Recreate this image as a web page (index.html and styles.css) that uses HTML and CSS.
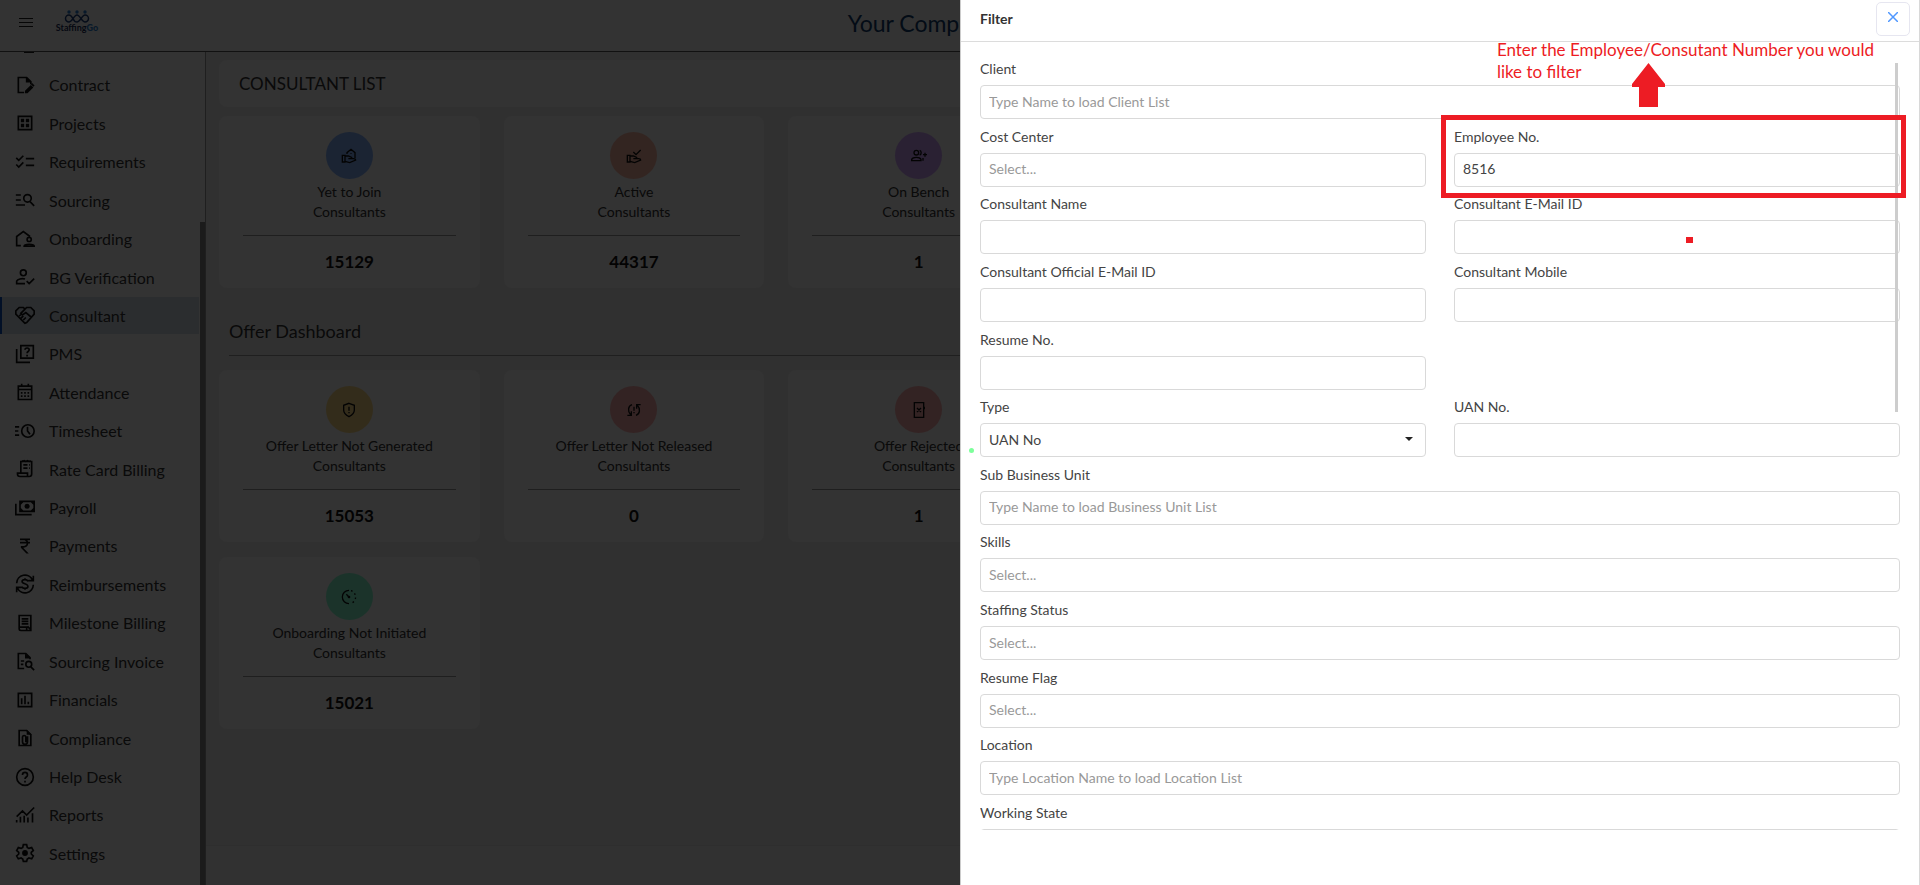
FILE: index.html
```html
<!DOCTYPE html>
<html lang="en">
<head>
<meta charset="UTF-8">
<meta name="viewport" content="width=device-width, initial-scale=1.0">
<title>StaffingGo - Consultant List</title>
<link rel="stylesheet" href="styles.css">
</head>
<body>

<div class="page">
  <header class="topbar">
    <div class="topbar__left">
      <button class="burger" aria-label="Menu">
        <svg viewBox="0 0 16 12"><path d="M1 1.500h14M1 5.500h14M1 9.500h14"/></svg>
      </button>
      <div class="logo">
        <svg viewBox="0 0 26 13">
          <g fill="#2b7fd0"><circle cx="5" cy="2" r="1.700"/><circle cx="13" cy="2" r="1.700"/><circle cx="21" cy="2" r="1.700"/></g>
          <path d="M9 8.500C7.500 6 6.500 5 5 5a3.500 3.500 0 0 0 0 7c3 0 5-7 8-7s5 7 8 7a3.500 3.500 0 0 0 0-7c-3 0-5 7-8 7s-2.500-1-4-3.500z" fill="none" stroke="#1d3f7c" stroke-width="1.500"/>
        </svg>
        <span class="logo__name">Staffing<b>Go</b></span>
      </div>
    </div>
    <div class="company">Your Comp</div>
  </header>

  <div class="layout">
    <nav class="menu">
      <div class="menu__cut"><svg viewBox="0 0 10 1"><path d="M0 .5h10"/></svg></div>
      <a href="#"><svg viewBox="0 0 24 24"><path d="M11 21H4V3h10l5 5v3M14 3v5h5" /><path class="fill" d="M14 3v5h5zM12 22v-3l7-7 3 3-7 7zM19 11l1.500-1.500 3 3L22 14z"/></svg>Contract</a>
      <a href="#"><svg viewBox="0 0 24 24"><path d="M4 4h16v16H4z"/><path class="fill" d="M7 7h4v4H7zM13 7h4v4h-4zM7 13h4v4H7zM13 13h4v4h-4z"/></svg>Projects</a>
      <a href="#"><svg viewBox="0 0 24 24"><path d="M1.500 7l3 3 5.500-5.500M1.500 15l3 3 5.500-5.500M13 8h10M13 16h10"/></svg>Requirements</a>
      <a href="#"><svg viewBox="0 0 24 24"><path d="M1 6h6M1 12h6M1 18h11M18 14l5 5"/><circle cx="15" cy="10" r="4.500"/></svg>Sourcing</a>
      <a href="#"><svg viewBox="0 0 24 24"><path d="M7 20H2V9l8-6 8 6"/><circle cx="17" cy="12.500" r="2.500"/><path d="M11 20.500c0-3 12-3 12 0z"/></svg>Onboarding</a>
      <a href="#"><svg viewBox="0 0 24 24"><circle cx="10" cy="7" r="3.500"/><path d="M12 20H2v-3c1-2 6-4 10-2.500M14 17l3 3 6-6"/></svg>BG Verification</a>
      <a href="#" class="active"><svg viewBox="0 0 24 24"><path d="M12 22L1 11V7l4-4h5l2 2 2-2h5l4 4v4L14 21zM12 5L7 10l2 2 4-3 7 6M5 13l3-2M7 16l3-3M10 18l3-3"/></svg>Consultant</a>
      <a href="#"><svg viewBox="0 0 24 24"><path d="M7 2h15v15H7zM2 6v16h16M12 7c0-3 5-3 5 0 0 2-2.500 2-2.500 4M14.500 13v2"/></svg>PMS</a>
      <a href="#"><svg viewBox="0 0 24 24"><path d="M4 5h16v16H4zM4 9h16M8 2v4M16 2v4M7 13h2M11 13h2M15 13h2M7 17h2M11 17h2M15 17h2"/></svg>Attendance</a>
      <a href="#"><svg viewBox="0 0 24 24"><circle cx="15.500" cy="12" r="7.500"/><path d="M15 7v5l3 4M0 7h5M0 12h4M0 17h5"/></svg>Timesheet</a>
      <a href="#"><svg viewBox="0 0 24 24"><path d="M7 16V3h13v15c0 2-1 3-3 3H6c-2 0-3-1-3-3v-1h12v3M10 7h5M10 11h5M17 7h1M17 11h1M8 2l1 1 2-1 2 1 2-1 2 1 2-1"/></svg>Rate Card Billing</a>
      <a href="#"><svg viewBox="0 0 24 24"><path d="M1 7v13h19"/><path class="fill" fill-rule="evenodd" d="M5 3h19v14H5zM7 8v4l3 3h9l3-3V8l-3-3h-9z"/><circle class="fill" cx="14.500" cy="10" r="3"/></svg>Payroll</a>
      <a href="#"><svg viewBox="0 0 24 24"><path class="fill" d="M13.660 7c-.56-1.180-1.760-2-3.160-2H6V3h12v2h-3.260c.48.58.84 1.260 1.050 2H18v2h-2.020c-.25 2.800-2.610 5-5.480 5h-.73l6.730 7h-2.770L7 14v-2h3.500c1.760 0 3.220-1.300 3.460-3H6V7h7.660z"/></svg>Payments</a>
      <a href="#"><svg viewBox="0 0 24 24"><path d="M2 11a10 10 0 0 1 19-4M22 13a10 10 0 0 1-19 4M22 2v6h-6M2 22v-6h6M15.500 9c-.5-3-7-3-7 0 0 3.500 7 2 7 6 0 3-7 3-7 0M12 5v2M12 17v2"/></svg>Reimbursements</a>
      <a href="#"><svg viewBox="0 0 24 24"><path d="M5 3h14v18H7c-1 0-2-1-2-2zM5 17h9v3M8 7h8M8 10h8M8 13h8M15 16l4 4"/></svg>Milestone Billing</a>
      <a href="#"><svg viewBox="0 0 24 24"><path d="M11 21H4V3h9l5 5v2M7 12h4M7 16h3M19 19l4 4"/><circle cx="16.500" cy="16" r="3.500"/><path class="fill" d="M12 3v6h7z"/></svg>Sourcing Invoice</a>
      <a href="#"><svg viewBox="0 0 24 24"><path d="M4 4h16v16H4zM8 10v7M12 7v10M16 14v3"/></svg>Financials</a>
      <a href="#"><svg viewBox="0 0 24 24"><path d="M5 3h9l5 5v13H5zM15 10v6.500a3 3 0 0 1-6 0V11a2 2 0 0 1 4 0v6"/><path class="fill" d="M14 2v6h6z"/></svg>Compliance</a>
      <a href="#"><svg viewBox="0 0 24 24"><circle cx="12" cy="12" r="10"/><path d="M9 9.500c0-4 6-4 6 0 0 2.500-3 2.500-3 5M12 16.500v2"/></svg>Help Desk</a>
      <a href="#"><svg viewBox="0 0 24 24"><path d="M2 21v-3M6.500 21v-7M11 21v-8M15.500 21v-6M21 21V10M2 14l7-7 5 5 9-9"/></svg>Reports</a>
      <a href="#"><svg viewBox="0 0 24 24"><path d="M10 2h4l.7 3.300 2 1.200 3.300-1 2 3.500-2.500 2.200v2l2.500 2.300-2 3.500-3.300-1-2 1.200L14 22h-4l-.7-2.800-2-1.200-3.300 1-2-3.500 2.500-2.300v-2L2 9l2-3.500 3.300 1 2-1.200z"/><circle class="fill" cx="12" cy="12" r="3.500"/></svg>Settings</a>
      <div class="menu__thumb"></div>
    </nav>

    <main class="main">
      <h1 class="title-card">CONSULTANT LIST</h1>

      <div class="cards">
        <div class="card">
          <span class="card__icon blue"><svg viewBox="0 0 24 24"><path d="M2 11h4v10H2zM6 12h5l5 2v2h-5M6 20l7 2 9-4c0-2-2-2-3-2h-3M9 9V7l6-5 6 5v8M15 8v1"/></svg></span>
          <p>Yet to Join<br>Consultants</p>
          <hr>
          <strong>15129</strong>
        </div>
        <div class="card">
          <span class="card__icon salmon"><svg viewBox="0 0 24 24"><path d="M2 11h4v10H2zM6 12h5l5 2v2h-5M6 20l7 2 9-4c0-2-2-2-3-2h-3M11 6l4 4 7-7"/></svg></span>
          <p>Active<br>Consultants</p>
          <hr>
          <strong>44317</strong>
        </div>
        <div class="card">
          <span class="card__icon purple"><svg viewBox="0 0 24 24"><circle cx="8" cy="7" r="3.500"/><path d="M1 19v-2c2-4 12-4 14 0v2zM13 3.500c3 1 3 6 0 7M18 19v-4M21 7v6M18 10h6"/></svg></span>
          <p>On Bench<br>Consultants</p>
          <hr>
          <strong>1</strong>
        </div>
      </div>

      <h2 class="section-title">Offer Dashboard</h2>

      <div class="cards">
        <div class="card">
          <span class="card__icon yellow"><svg viewBox="0 0 24 24"><path d="M12 2l8 3v7c0 5-4 8-8 10-4-2-8-5-8-10V5zM12 7v6M12 15v2"/></svg></span>
          <p>Offer Letter Not Generated<br>Consultants</p>
          <hr>
          <strong>15053</strong>
        </div>
        <div class="card">
          <span class="card__icon red"><svg viewBox="0 0 24 24"><path d="M9 4c-6 2-7 10-2 15M2 20h6v-6M15 20c6-2 7-10 2-15M22 4h-6v6M12 7v6M12 15v2"/></svg></span>
          <p>Offer Letter Not Released<br>Consultants</p>
          <hr>
          <strong>0</strong>
        </div>
        <div class="card">
          <span class="card__icon red"><svg viewBox="0 0 24 24"><path d="M5 1h14v22H5zM9 9l6 6M15 9l-6 6M20 7v4"/></svg></span>
          <p>Offer Rejected<br>Consultants</p>
          <hr>
          <strong>1</strong>
        </div>
        <div class="card card--first">
          <span class="card__icon green"><svg viewBox="0 0 24 24"><path d="M12 2a10 10 0 0 0 0 20M8 8l5 5"/><path d="M15 2.500a10 10 0 0 1 0 19" stroke-dasharray="2.500 4"/><circle class="fill" cx="12" cy="12" r="2"/></svg></span>
          <p>Onboarding Not Initiated<br>Consultants</p>
          <hr>
          <strong>15021</strong>
        </div>
      </div>

      <footer class="footer"></footer>
    </main>
  </div>
</div>

<div class="backdrop"></div>

<aside class="panel">
  <div class="panel__head">
    <h3>Filter</h3>
    <button class="close" aria-label="Close"><svg viewBox="0 0 10 10"><path d="M0 0l10 10M10 0L0 10"/></svg></button>
  </div>

  <form class="filter">
    <div class="field field--wide">
      <label for="client">Client</label>
      <input type="text" id="client" placeholder="Type Name to load Client List">
    </div>
    <div class="field">
      <label for="cost">Cost Center</label>
      <input type="text" id="cost" placeholder="Select...">
    </div>
    <div class="field">
      <label for="empno">Employee No.</label>
      <input type="text" id="empno" value="8516">
    </div>
    <div class="field">
      <label for="name">Consultant Name</label>
      <input type="text" id="name">
    </div>
    <div class="field">
      <label for="email">Consultant E-Mail ID</label>
      <input type="text" id="email">
    </div>
    <div class="field">
      <label for="official">Consultant Official E-Mail ID</label>
      <input type="text" id="official">
    </div>
    <div class="field">
      <label for="mobile">Consultant Mobile</label>
      <input type="text" id="mobile">
    </div>
    <div class="field">
      <label for="resume">Resume No.</label>
      <input type="text" id="resume">
    </div>
    <div class="field field--first">
      <label for="type">Type</label>
      <div class="select">
        <select id="type"><option>UAN No</option></select>
        <svg viewBox="0 0 8 4"><path d="M0 0h8L4 4z"/></svg>
      </div>
    </div>
    <div class="field">
      <label for="uan">UAN No.</label>
      <input type="text" id="uan">
    </div>
    <div class="field field--wide">
      <label for="unit">Sub Business Unit</label>
      <input type="text" id="unit" placeholder="Type Name to load Business Unit List">
    </div>
    <div class="field field--wide">
      <label for="skills">Skills</label>
      <input type="text" id="skills" placeholder="Select...">
    </div>
    <div class="field field--wide">
      <label for="status">Staffing Status</label>
      <input type="text" id="status" placeholder="Select...">
    </div>
    <div class="field field--wide">
      <label for="flag">Resume Flag</label>
      <input type="text" id="flag" placeholder="Select...">
    </div>
    <div class="field field--wide">
      <label for="location">Location</label>
      <input type="text" id="location" placeholder="Type Location Name to load Location List">
    </div>
    <div class="field field--wide field--cut">
      <label for="state">Working State</label>
      <input type="text" id="state">
    </div>
  </form>

  <div class="panel__thumb"></div>

  <!-- hints over the form -->
  <p class="note">Enter the Employee/Consutant Number you would<br>like to filter</p>
  <svg class="note-arrow" viewBox="0 0 33 44"><path d="M16.500 0L33 21v3h-7v20H7V24H0v-3z"/></svg>
  <div class="note-box"></div>
  <div class="note-mark"></div>
  <div class="note-dot"></div>
</aside>

</body>
</html>
```
FILE: styles.css
```css
* {
  box-sizing: border-box;
}

body {
  margin: 0;
  height: 100vh;
  overflow: hidden;
  font-family: Lato, "Open Sans", sans-serif;
  font-size: 14px;
  color: #333;
}

button, input, select {
  font: inherit;
  color: inherit;
}

.page {
  height: 100vh;
  display: flex;
  flex-direction: column;
  background: #fff;
}

/* top bar */
.topbar {
  display: grid;
  grid-template-columns: 44% 1fr;
  column-gap: 3px;
  height: 52px;
  border-bottom: 1px solid #555;
}

.topbar__left {
  display: flex;
  align-items: flex-start;
  gap: 20px;
  padding: 10px 18px;
}

.burger {
  padding: 7px 0 0;
  border: none;
  background: none;
}

.burger svg {
  display: block;
  width: 16px;
  height: 12px;
}

.burger path {
  stroke: #222;
  stroke-width: 1;
}

.logo {
  display: flex;
  flex-direction: column;
  align-items: center;
  width: 46px;
}

.logo svg {
  width: 26px;
  height: 13px;
}

.logo__name {
  font-size: 9px;
  line-height: 10px;
  font-weight: bold;
  color: #1d2f5c;
}

.logo__name b {
  color: #2b7fd0;
}

.company {
  font-size: 23px;
  line-height: 46px;
  color: #123c6e;
}

.layout {
  flex: 1;
  min-height: 0;
  display: flex;
}

/* left menu */
.menu {
  position: relative;
  width: 206px;
  display: flex;
  flex-direction: column;
  justify-content: space-between;
  padding: 0 6px 13px 0;
  border-right: 1px solid #999;
}

.menu__cut {
  height: 13px;
  padding-left: 24px;
}

.menu__cut svg {
  display: block;
  width: 10px;
  height: 1px;
}

.menu__cut path {
  stroke: #222;
}

.menu a {
  display: flex;
  align-items: center;
  gap: 14px;
  height: 37px;
  padding-left: 13px;
  border-left: 2px solid transparent;
  font-size: 16px;
  color: #333;
  text-decoration: none;
}

.menu a svg {
  width: 20px;
  height: 20px;
}

.menu a path, .menu a circle,
.card__icon path, .card__icon circle {
  fill: none;
  stroke: #111;
  stroke-width: 2;
}

.menu a .fill, .card__icon .fill {
  fill: #111;
  stroke: none;
}

.menu a.active {
  background: #d8e0ea;
  border-left-color: #0a4fc4;
}

.menu__thumb {
  position: absolute;
  top: 170px;
  right: 0;
  bottom: 0;
  width: 5px;
  background: #888;
}

/* content */
.main {
  flex: 1;
  display: flex;
  flex-direction: column;
  padding: 8px 17px 0 13px;
  background: #f1f1f1;
}

.title-card {
  margin: 0 0 9px;
  padding: 0 20px;
  border-radius: 8px;
  background: #fcfcfc;
  font-size: 17px;
  line-height: 47px;
  font-weight: normal;
}

.cards {
  display: grid;
  grid-template-columns: repeat(6, 1fr);
  gap: 15px 24px;
}

.card {
  display: flex;
  flex-direction: column;
  align-items: center;
  height: 172px;
  padding: 16px 24px 0;
  border-radius: 8px;
  background: #fcfcfc;
  text-align: center;
}

/* starts a new row */
.card--first {
  grid-column: 1;
}

.card__icon {
  display: flex;
  align-items: center;
  justify-content: center;
  width: 47px;
  height: 47px;
  border-radius: 50%;
}

.card__icon svg {
  width: 16px;
  height: 16px;
}

.blue { background: #87b4ff; }
.salmon { background: #ffb9a5; }
.purple { background: #d2a5ff; }
.yellow { background: #ffdc87; }
.red { background: #ffafaf; }
.green { background: #87ffd2; }

.card p {
  margin: 3px 0 0;
  line-height: 20px;
  white-space: nowrap;
}

.card hr {
  width: 100%;
  height: 1px;
  margin: 13px 0;
  border: none;
  background: #999;
}

.card strong {
  font-size: 17px;
  line-height: 26px;
  color: #111;
}

.section-title {
  margin: 19px 0 14px;
  margin-left: 10px;
  border-bottom: 1px solid #999;
  font-size: 18px;
  line-height: 48px;
  font-weight: normal;
}

.footer {
  height: 40px;
  margin: auto -17px 0 -13px;
  border-top: 1px solid #e4e4e4;
  background: #f6f6f6;
}

.backdrop {
  position: fixed;
  inset: 0;
  background: rgba(0, 0, 0, 0.8);
}

/* filter panel */
.panel {
  position: fixed;
  top: 0;
  right: 0;
  bottom: 0;
  width: 50%;
  display: flex;
  flex-direction: column;
  border-left: 1px solid #ccc;
  border-right: 1px solid #d8d8d8;
  background: #fff;
}

.panel__head {
  display: flex;
  justify-content: space-between;
  align-items: center;
  height: 42px;
  padding: 0 9px 4px 19px;
  border-bottom: 1px solid #dcdcdc;
}

.panel__head h3 {
  margin: 0;
  font-size: 14px;
}

.close {
  display: flex;
  align-items: center;
  justify-content: center;
  width: 34px;
  height: 34px;
  padding: 0 0 3px;
  border: 1px solid #e6e6f0;
  border-radius: 5px;
  background: #fff;
}

.close svg {
  width: 10px;
  height: 10px;
}

.close path {
  stroke: #4f97ff;
  stroke-width: 1.5;
}

.filter {
  flex: 1;
  display: grid;
  grid-template-columns: 1fr 1fr;
  align-content: space-between;
  column-gap: 28px;
  margin: 16px 19px 55px;
}

.field {
  display: flex;
  flex-direction: column;
  gap: 6px;
  color: #444;
}

.field--wide {
  grid-column: 1 / 3;
}

.field--first {
  grid-column: 1;
}

.field--cut {
  height: 28px;
  overflow: hidden;
}

.field label {
  line-height: 21px;
}

.field input, .field select {
  flex-shrink: 0;
  width: 100%;
  height: 34px;
  padding: 0 8px 2px;
  border: 1px solid #d9d9d9;
  border-radius: 4px;
  background: #fff;
  outline: none;
}

.field input::placeholder {
  color: #999;
}

.select {
  position: relative;
}

.field select {
  display: block;
  appearance: none;
}

.select svg {
  position: absolute;
  top: 14px;
  right: 13px;
  width: 8px;
  height: 4px;
  fill: #222;
}

.panel__thumb {
  position: absolute;
  top: 63px;
  right: 21px;
  width: 3px;
  height: 349px;
  background: #cdcdcd;
}

.note {
  position: absolute;
  top: 39px;
  right: 45px;
  margin: 0;
  font-size: 17px;
  line-height: 22px;
  color: #ed1c24;
}

.note-arrow {
  position: absolute;
  top: 63px;
  right: 254px;
  width: 33px;
  height: 44px;
  fill: #ed1c24;
}

.note-box {
  position: absolute;
  top: 115px;
  right: 13px;
  width: 465px;
  height: 83px;
  border: 5px solid #ed1c24;
}

.note-mark {
  position: absolute;
  top: 237px;
  right: 226px;
  width: 7px;
  height: 6px;
  background: #ed1c24;
}

.note-dot {
  position: absolute;
  top: 448px;
  left: 8px;
  width: 5px;
  height: 5px;
  border-radius: 50%;
  background: #7dff9b;
}
```
